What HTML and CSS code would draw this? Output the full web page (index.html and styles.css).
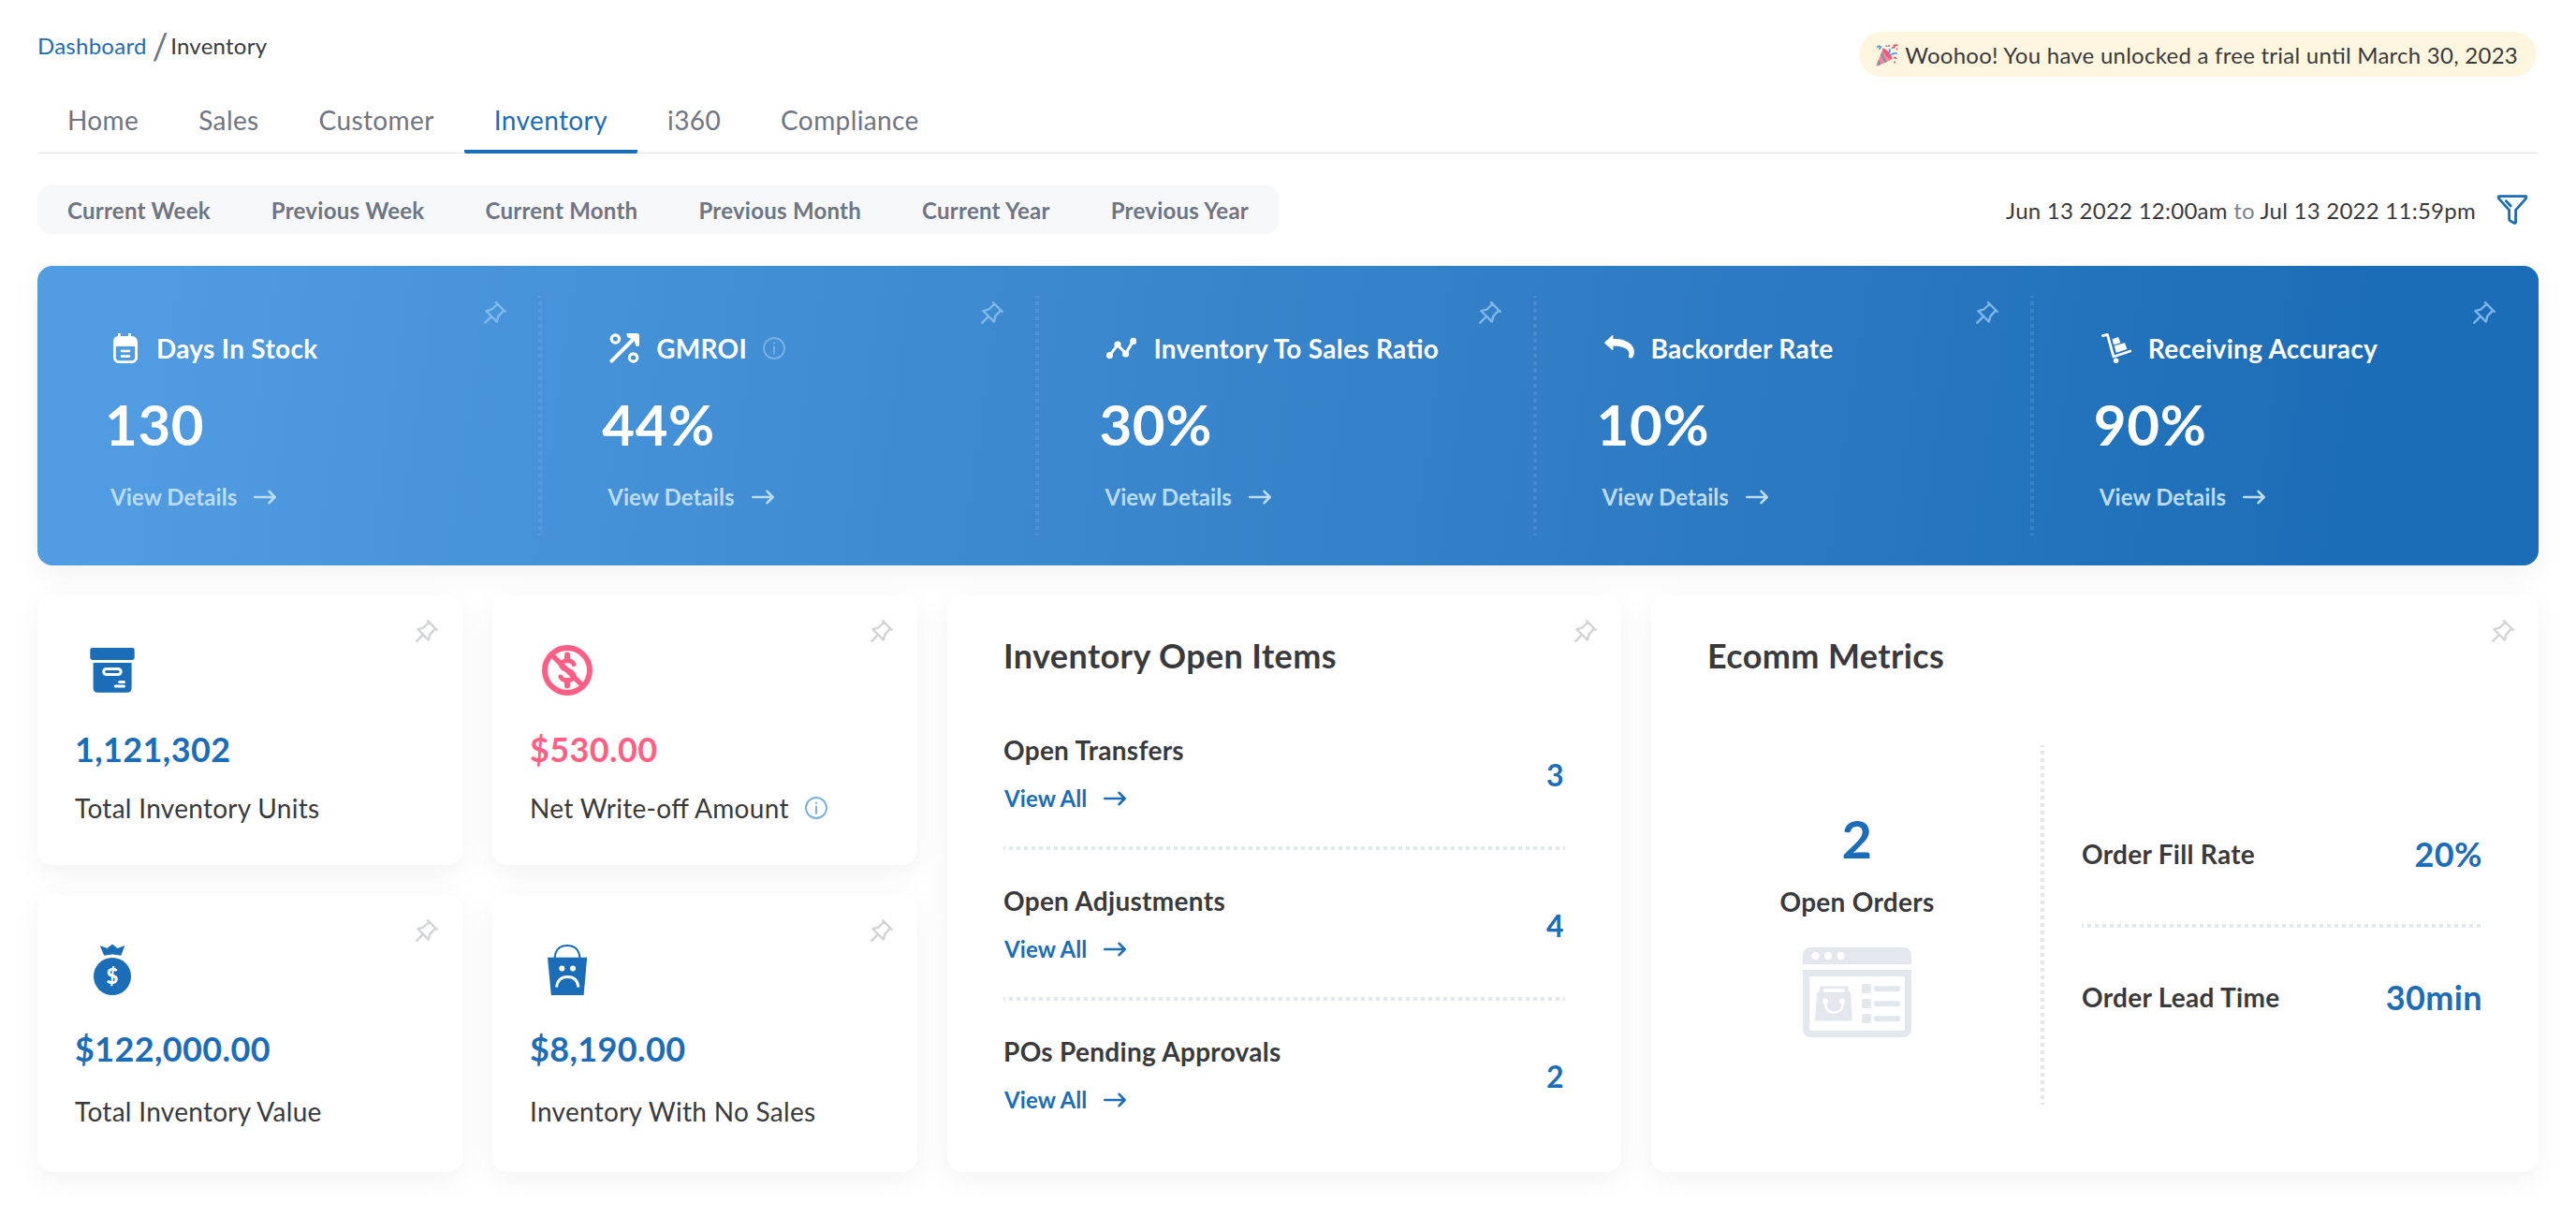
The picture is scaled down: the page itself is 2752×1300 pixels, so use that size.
FILE: index.html
```html
<!DOCTYPE html>
<html lang="en">
<head>
<meta charset="utf-8">
<title>Inventory</title>
<link rel="stylesheet" href="styles.css">
</head>
<body>
<svg width="0" height="0" class="defs" aria-hidden="true">
  <symbol id="pin" viewBox="0 0 24 24">
    <path d="M1.2 22.8 7.8 16.2M13 1.2 22.8 11M14.2 3 8.2 8.7 2.4 10.2 13.8 21.6 15.4 15.6 21 9.6" fill="none" stroke="currentColor" stroke-width="2.4" stroke-linecap="round" stroke-linejoin="round"/>
  </symbol>
  <symbol id="arrow" viewBox="0 0 24 16">
    <path d="M1.2 8H22M16.6 1.8 22.6 8 16.6 14.2" fill="none" stroke="currentColor" stroke-width="2.6" stroke-linecap="round" stroke-linejoin="round"/>
  </symbol>
  <symbol id="info" viewBox="0 0 24 24">
    <circle cx="12" cy="12" r="11" fill="none" stroke="currentColor" stroke-width="1.9"/>
    <path d="M12 10.4V18" stroke="currentColor" stroke-width="1.9" stroke-linecap="round"/>
    <circle cx="12" cy="6.6" r="1.2" fill="currentColor"/>
  </symbol>
</svg>
<div class="page">
  <header class="top">
    <nav class="crumbs"><a class="crumb-link">Dashboard</a><span class="slash">/</span><span>Inventory</span></nav>
    <div class="trial">
      <svg class="party" viewBox="0 0 24 24">
        <path d="M7 7 0.6 22.4Q0.4 23.8 1.8 23.4L17 16.6Q13 9.500 7 7Z" fill="#f8839b"/>
        <path d="M7 7 4.800 12.300 9.500 20 12 18.900Q7.500 13 7 7ZM3 16.500 1.300 20.800 3.200 22.800 5.600 21.700Z" fill="#8b8fa0"/>
        <path d="M7 6Q7 3.500 10 5.500 16.500 9.500 17.500 16.500 10.500 14.500 7 6Z" fill="#f5567c"/>
        <path d="M13 11Q16 8 14.500 5M15 12.500Q18.500 9 23 10" fill="none" stroke="#4d9be0" stroke-width="1.700"/>
        <path d="M1 3.500 3.500 2 5 4.500M3.500 6 6 2.500M10.500 1.500 12.500 3" fill="none" stroke="#4d9be0" stroke-width="1.500"/>
        <path d="M17 4.500 20 3 19.500 1.500 23.500 1M19 15Q21 13.500 22 16" fill="none" stroke="#f0486f" stroke-width="1.600"/>
        <g fill="#f0486f"><circle cx="14" cy="2" r="1"/><circle cx="20" cy="19.500" r="1"/><circle cx="22.500" cy="5.500" r=".9"/></g>
      </svg>
      <span>Woohoo! You have unlocked a free trial until March 30, 2023</span>
    </div>
  </header>

  <nav class="tabs">
    <a class="tab">Home</a><a class="tab">Sales</a><a class="tab">Customer</a><a class="tab active">Inventory</a><a class="tab">i360</a><a class="tab">Compliance</a>
  </nav>

  <div class="filters">
    <div class="periods">
      <span>Current Week</span><span>Previous Week</span><span>Current Month</span><span>Previous Month</span><span>Current Year</span><span>Previous Year</span>
    </div>
    <div class="range">
      <span>Jun 13 2022 12:00am <span class="muted">to</span> Jul 13 2022 11:59pm</span>
      <svg class="funnel" viewBox="0 0 34 34"><path d="M2.600 2.600H31.400Q32.400 3.600 31.200 5.400L20.600 17.400V30.400Q20.400 31.800 19 31.200L14.600 28.800Q13.600 28.200 13.600 27V17.400L2.800 5.400Q1.600 3.800 2.600 2.600ZM10.400 7.800 15.200 13" fill="none" stroke="currentColor" stroke-width="2.800" stroke-linejoin="round" stroke-linecap="round"/></svg>
    </div>
  </div>

  <section class="kpis">
    <article class="kpi">
      <svg class="pin"><use href="#pin"/></svg>
      <h3><svg class="kpi-icon narrow" viewBox="0 0 32 32"><path d="M8 0.600a1.400 1.400 0 0 1 2.800 0V3h8.400V.6a1.400 1.400 0 0 1 2.800 0V3h.8A6 6 0 0 1 29 9v17a6 6 0 0 1-6 6H9a6 6 0 0 1-6-6V9a6 6 0 0 1 5-5.900ZM5.800 14v11.600a3.600 3.600 0 0 0 3.600 3.600h13.200a3.600 3.600 0 0 0 3.600-3.600V14Z" fill="#fff" fill-rule="evenodd"/><path d="M12 19h8M12 24.600h8" stroke="#fff" stroke-width="2.600" stroke-linecap="round"/></svg>Days In Stock</h3>
      <div class="kpi-value">130</div>
      <a class="more">View Details<svg class="arrow"><use href="#arrow"/></svg></a>
    </article>
    <article class="kpi">
      <svg class="pin"><use href="#pin"/></svg>
      <h3><svg class="kpi-icon" viewBox="0 0 32 32"><g fill="none" stroke="#fff"><circle cx="6.400" cy="6" r="4.200" stroke-width="3.200"/><circle cx="25.600" cy="26" r="4.200" stroke-width="3.200"/><path d="M2.400 29.600 25 7" stroke-width="4" stroke-linecap="round"/></g><path d="M18.500 0H29.500Q32 0 32 2.500V13.500L28.500 14 26.500 7.500 19 4Z" fill="#fff"/></svg>GMROI<svg class="info"><use href="#info"/></svg></h3>
      <div class="kpi-value">44%</div>
      <a class="more">View Details<svg class="arrow"><use href="#arrow"/></svg></a>
    </article>
    <article class="kpi">
      <svg class="pin"><use href="#pin"/></svg>
      <h3><svg class="kpi-icon" viewBox="0 0 32 32"><path d="M3.600 23.400 12 12.400 20.600 21.600 28.600 8.400" fill="none" stroke="#fff" stroke-width="3" stroke-linejoin="round"/><g fill="#fff"><circle cx="3.400" cy="23.600" r="3.600"/><circle cx="12" cy="12" r="3.600"/><circle cx="20.600" cy="22" r="3.600"/><circle cx="28.800" cy="8.400" r="3.600"/></g></svg>Inventory To Sales Ratio</h3>
      <div class="kpi-value">30%</div>
      <a class="more">View Details<svg class="arrow"><use href="#arrow"/></svg></a>
    </article>
    <article class="kpi">
      <svg class="pin"><use href="#pin"/></svg>
      <h3><svg class="kpi-icon" viewBox="0 0 32 32"><path d="M.4 9.600 8.600 2Q9.400 1.600 9.400 2.800V6.200C22 5.200 31.800 12 31.800 19.500 31.800 23.500 30.600 26.800 28 26.600 25.800 26.400 25.600 24.600 26.400 22.400 27.400 17 19 13.200 9.400 13.400V17Q9.400 18.600 8.200 17.800L.4 10.800Z" fill="#fff"/></svg>Backorder Rate</h3>
      <div class="kpi-value">10%</div>
      <a class="more">View Details<svg class="arrow"><use href="#arrow"/></svg></a>
    </article>
    <article class="kpi">
      <svg class="pin"><use href="#pin"/></svg>
      <h3><svg class="kpi-icon" viewBox="0 0 32 32"><path d="M1.400 2.600 6.400 1.400 13 25 31 19" fill="none" stroke="#fff" stroke-width="2.800" stroke-linecap="round" stroke-linejoin="round"/><circle cx="15.600" cy="29.300" r="2.800" fill="#fff"/><path d="M11.800 6.600 18 4.400 20 10 13.400 12ZM14 13.600 24.800 10.600 27 16.800 16 20.400Z" fill="#fff" stroke="#fff" stroke-width=".6" stroke-linejoin="round"/></svg>Receiving Accuracy</h3>
      <div class="kpi-value">90%</div>
      <a class="more">View Details<svg class="arrow"><use href="#arrow"/></svg></a>
    </article>
  </section>

  <main class="board">
    <div class="stats">
      <article class="card stat">
        <svg class="pin"><use href="#pin"/></svg>
        <svg class="stat-icon" viewBox="0 0 80 80"><path d="M18.300 16h43.400q2 0 2 2v8.600q0 2.400-2.400 2.400H18.700q-2.400 0-2.400-2.400V18q0-2 2-2ZM19.600 32h41v27q0 4.800-4.800 4.800H24.400q-4.800 0-4.800-4.800Z" fill="#1c6db7"/><g fill="none" stroke="#fff" stroke-linecap="round" stroke-width="3"><rect x="30.700" y="38.500" width="18.500" height="6" rx="3"/><path d="M47.700 52.500h4.800M43.200 57h9.300"/></g></svg>
        <strong class="stat-value">1,121,302</strong>
        <span class="stat-label">Total Inventory Units</span>
      </article>
      <article class="card stat danger">
        <svg class="pin"><use href="#pin"/></svg>
        <svg class="stat-icon" viewBox="0 0 80 80"><g fill="none" stroke="#ff5f85" stroke-linecap="round"><circle cx="40" cy="40" r="24" stroke-width="6"/><path d="M23 23 57 57" stroke-width="5.500"/><path d="M40 23.500V29M40 51V56.500" stroke-width="6"/><path d="M47 33.500C45.500 28.500 33.500 28.500 33.500 34.500 33.500 40.500 47 39 47 46 47 52 34.500 52.500 33 47" stroke-width="5"/></g></svg>
        <strong class="stat-value">$530.00</strong>
        <span class="stat-label">Net Write-off Amount<svg class="info"><use href="#info"/></svg></span>
      </article>
      <article class="card stat">
        <svg class="pin"><use href="#pin"/></svg>
        <svg class="stat-icon" viewBox="0 0 80 80"><circle cx="40" cy="47" r="20" fill="#1c6db7"/><path d="M27.500 14.800 34.500 17.500 40 13 45.500 17.500 52.500 14.800 49 24.200Q40 21.600 31.500 24.200Z" fill="#1c6db7" stroke="#1c6db7" stroke-width="1" stroke-linejoin="round"/><text x="40" y="55" text-anchor="middle" class="bag-sign">$</text></svg>
        <strong class="stat-value">$122,000.00</strong>
        <span class="stat-label">Total Inventory Value</span>
      </article>
      <article class="card stat">
        <svg class="pin"><use href="#pin"/></svg>
        <svg class="stat-icon" viewBox="0 0 80 80"><path d="M19 26.800H61.200L57.600 67H22.800Z" fill="#1c6db7"/><path d="M26.500 27.500Q27.500 14 40 14T53.500 27.500" fill="none" stroke="#1c6db7" stroke-width="2"/><circle cx="34.300" cy="38.500" r="3" fill="#fff"/><circle cx="46" cy="38.500" r="3" fill="#fff"/><path d="M28.500 58.500Q30 47.500 40.300 47.500T52 58.500" fill="none" stroke="#fff" stroke-width="2.800"/></svg>
        <strong class="stat-value">$8,190.00</strong>
        <span class="stat-label">Inventory With No Sales</span>
      </article>
    </div>

    <article class="card panel">
      <svg class="pin"><use href="#pin"/></svg>
      <h2>Inventory Open Items</h2>
      <div class="open-list">
        <div class="open-row"><div><h4>Open Transfers</h4><a class="more">View All<svg class="arrow"><use href="#arrow"/></svg></a></div><b>3</b></div>
        <div class="dots"></div>
        <div class="open-row"><div><h4>Open Adjustments</h4><a class="more">View All<svg class="arrow"><use href="#arrow"/></svg></a></div><b>4</b></div>
        <div class="dots"></div>
        <div class="open-row"><div><h4>POs Pending Approvals</h4><a class="more">View All<svg class="arrow"><use href="#arrow"/></svg></a></div><b>2</b></div>
      </div>
    </article>

    <article class="card panel">
      <svg class="pin"><use href="#pin"/></svg>
      <h2>Ecomm Metrics</h2>
      <div class="ecomm">
        <div class="orders">
          <b>2</b>
          <h4>Open Orders</h4>
          <svg class="window" viewBox="0 0 116 96"><path d="M8 0H108a8 8 0 0 1 8 8V18H0V8A8 8 0 0 1 8 0ZM0 24H116V88a8 8 0 0 1-8 8H8a8 8 0 0 1-8-8ZM8.500 31Q7 31 7 32.500V87Q7 89 9 89H107Q109 89 109 87V32.500Q109 31 107.500 31Z" fill="#e5e7ee" fill-rule="evenodd"/><g fill="#fff"><circle cx="13.500" cy="9" r="4.200"/><circle cx="27" cy="9" r="4.200"/><circle cx="40.500" cy="9" r="4.200"/></g><path d="M18 41.500H48.500V46L51 47.500 52.800 77Q52.800 78.500 51.500 78.500H14.500Q13 78.500 13 77L15 49.500 18 46Z" fill="#e5e7ee"/><path d="M22 44H44.500V48H22Z" fill="#fff"/><path d="M24 58Q24 69.500 33.500 69.500T42.500 58" fill="none" stroke="#fff" stroke-width="2.400"/><circle cx="24" cy="57.500" r="3" fill="#fff"/><circle cx="42" cy="57.500" r="3" fill="#fff"/><g fill="#e5e7ee"><rect x="63" y="39" width="10" height="10" rx="1.500"/><rect x="63" y="55" width="10" height="10" rx="1.500"/><rect x="63" y="71" width="10" height="10" rx="1.500"/><rect x="76" y="41.300" width="28" height="5.700" rx="1"/><rect x="76" y="57.300" width="28" height="5.700" rx="1"/><rect x="76" y="73.300" width="28" height="5.700" rx="1"/></g></svg>
        </div>
        <div class="vdots"></div>
        <div class="rates">
          <div class="rate"><h4>Order Fill Rate</h4><b>20%</b></div>
          <div class="dots"></div>
          <div class="rate"><h4>Order Lead Time</h4><b>30min</b></div>
        </div>
      </div>
    </article>
  </main>
</div>
</body>
</html>
```
FILE: styles.css
```css
* { box-sizing: border-box; margin: 0; padding: 0; }
body {
  background: #fff;
  color: #3a3a3c;
  font-family: Lato, "Open Sans", sans-serif;
  font-size: 24px;
  line-height: 1;
  font-feature-settings: "liga" 1;
}
/* tracking scales with each element's own font size */
.page * { letter-spacing: .0105em; }
.defs { position: absolute; }
.page { width: 2752px; height: 1300px; padding: 32px 40px 48px; overflow: hidden; }
svg { display: block; flex: none; }

.top { display: flex; justify-content: space-between; align-items: flex-start; height: 54px; }
.crumbs { display: flex; align-items: center; height: 34px; }
.crumb-link { color: #1c6db7; }
.slash { color: #6f7582; font-size: 38px; margin: 0 2px 0 6px; }
.trial {
  display: flex; align-items: center; gap: 7px;
  height: 52px; padding: 1px 20px 0 18px;
  border: 2px solid #fff; border-radius: 26px;
  background: #fff6df; background-clip: padding-box;
}
.party { width: 24px; height: 24px; }

.tabs { display: flex; height: 78px; border-bottom: 1px solid #e4e5e9; font-size: 28px; color: #6f7582; }
.tab { padding: 28px 32px 0; height: 78px; letter-spacing: .014em; }
.active { color: #1c6db7; border-bottom: 4px solid #1c6db7; border-radius: 2px; }

.filters { display: flex; justify-content: space-between; margin-top: 32px; height: 56px; align-items: center; }
.periods {
  display: flex; gap: 65px; align-items: center;
  height: 52px; padding: 2px 32px 0; border-radius: 14px;
  background: #f7f8fa; color: #6f7582; font-weight: 700;
}
.range { display: flex; align-items: center; gap: 22px; padding-right: 11px; }
.range > span { padding-top: 1px; }
.muted { color: #7d8290; }
.funnel { width: 34px; height: 34px; color: #1c6db7; }

.kpis {
  display: flex; height: 320px; margin-top: 32px; padding: 0 8px;
  border-radius: 16px; color: #fff;
  background: linear-gradient(98deg, #529ce2 2%, #428fd5 28%, #317ec6 60%, #1c6db7 92%);
  box-shadow: 0 8px 32px rgba(0, 0, 0, .055);
}
.kpi { position: relative; flex: 1; margin: 32px 0; padding: 38px 0 0 70px; }
.kpi:not(:last-child) {
  background: repeating-linear-gradient(rgba(140, 195, 245, .2) 0 2px, transparent 2px 6px, rgba(140, 195, 245, .2) 6px 8px) right / 4px 100% no-repeat;
}
.pin { position: absolute; width: 24px; height: 24px; color: #d3d4d6; top: 26px; right: 26px; }
.kpi .pin { top: 6px; right: 38px; color: #86bdec; opacity: .9; }
.kpi h3 { display: flex; align-items: center; height: 36px; font-size: 28px; font-weight: 700; white-space: nowrap; }
.kpi-icon { width: 32px; height: 32px; margin: 0 18px 0 2px; }
.kpi-icon.narrow { margin: 0 17px 0 0; }
.info { width: 24px; height: 24px; color: #77b0e2; margin-left: 17px; }
.kpi-value { margin: 33px 0 0 -6px; font-size: 60px; font-weight: 700; height: 60px; }
.more { display: flex; align-items: center; gap: 18px; font-weight: 700; letter-spacing: .003em; }
.kpi .more { margin: 36px 0 0 0; color: #bcdcf6; }
.arrow { width: 24px; height: 16px; }

.board { display: grid; grid-template-columns: 940px 720px 948px; gap: 32px; margin-top: 32px; height: 616px; }
.stats { display: grid; grid-template-columns: 454px 454px; grid-template-rows: 288px 296px; gap: 32px; }
.card { position: relative; background: #fff; border-radius: 16px; box-shadow: 0 8px 32px rgba(0, 0, 0, .055); }
.stat { display: flex; flex-direction: column; padding: 40px; }
.stat-icon { width: 80px; height: 80px; }
.stat-value { margin-top: 26px; font-size: 36px; font-weight: 700; color: #1c6db7; }
.stat-label { display: flex; align-items: center; margin-top: 31px; font-size: 28px; }
.stat:nth-child(n+3) .stat-label { margin-top: 35px; }
.danger .stat-value { color: #ff5f85; }
.bag-sign { font-size: 22px; font-weight: 900; fill: #fff; }

.panel { padding: 44px 60px 0; }
h2 { font-size: 36px; font-weight: 700; line-height: 40px; }
h4 { font-size: 28px; font-weight: 700; }
.panel b { color: #1c6db7; font-weight: 700; }
.panel .more { color: #1c6db7; }
.open-list { margin-top: 65px; }
.open-row { display: flex; justify-content: space-between; align-items: flex-start; height: 85px; padding-top: 2px; }
.open-row b { font-size: 32px; margin: 25px 1px 0 0; }
.open-row .more { margin: 26px 0 0 1px; }
.dots { height: 4px; margin: 34px 0 38px; background: repeating-linear-gradient(90deg, #e5e7ee 0 2px, transparent 2px 6px, #e5e7ee 6px 8px); }
.ecomm { display: flex; height: 384px; margin-top: 76px; }
.orders { width: 320px; display: flex; flex-direction: column; align-items: center; padding-top: 72px; }
.orders b { font-size: 56px; }
.orders h4 { margin-top: 25px; }
.window { width: 116px; height: 96px; margin-top: 35px; }
.vdots { width: 4px; margin-left: 36px; background: repeating-linear-gradient(#e5e7ee 0 2px, transparent 2px 6px, #e5e7ee 6px 8px); }
.rates { width: 428px; margin-left: 40px; padding-top: 98px; }
.rate { display: flex; justify-content: space-between; align-items: center; height: 36px; }
.rate b { font-size: 36px; }
.rates .dots { margin: 57px 0 56px; }
```
